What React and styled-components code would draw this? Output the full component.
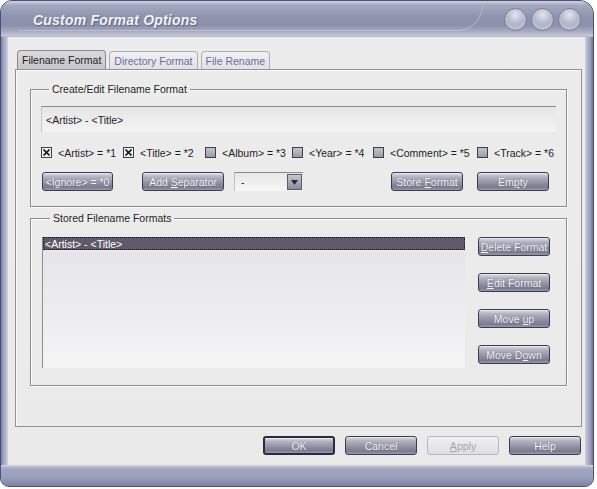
import styled, { createGlobalStyle } from "styled-components";

const GlobalStyle = createGlobalStyle`
  html, body { margin: 0; padding: 0; background: #ffffff; }
  body { font-family: "Liberation Sans", Arial, sans-serif; font-size: 10.5px; color: #1e1e1e; }
  * { box-sizing: border-box; }
`;

const Window = styled.div`
  width: 594px;
  height: 487px;
  border-radius: 12px 14px 9px 9px;
  overflow: hidden;
  display: flex;
  flex-direction: column;
  background: #9a9ebb;
  border: 1px solid #4a4e78;
`;

const TitleBar = styled.div`
  position: relative;
  height: 36px;
  flex: none;
  display: flex;
  align-items: center;
  padding: 0 12px 0 32px;
  background: linear-gradient(#d2d4de 0%, #a4a8bf 12%, #8f94ae 45%, #8c91ab 70%, #a9adc3 88%, #c7c9d6 100%);
  border-bottom: 1px solid #b8bac9;

  &::before {
    content: "";
    position: absolute;
    left: 18px;
    right: 110px;
    top: 4px;
    height: 25px;
    border-radius: 0 0 36px 0;
    border-bottom: 1px solid rgba(220, 222, 234, 0.4);
    border-right: 1px solid rgba(220, 222, 234, 0.4);
    pointer-events: none;
  }
`;

const Title = styled.div`
  flex: 1;
  font-family: "Liberation Sans", Arial, sans-serif;
  font-weight: bold;
  font-style: italic;
  font-size: 14px;
  color: #f2f2f6;
  text-shadow: 1px 1px 1px rgba(60, 64, 96, 0.6);
  letter-spacing: 0.2px;
  margin-top: 3px;
`;

const Caps = styled.div`
  display: flex;
  gap: 4px;
  margin-top: 2px;
`;

const Cap = styled.div`
  width: 23px;
  height: 23px;
  border-radius: 50%;
  border: 1px solid #7a7e9c;
  background: radial-gradient(circle at 50% 28%, #e4e5ee 0%, #bcbfd0 40%, #a0a4bb 75%, #9296b0 100%);
  box-shadow: inset 0 -3px 3px rgba(235, 236, 244, 0.45);
`;

const Middle = styled.div`
  flex: 1;
  display: flex;
  min-height: 0;
`;

const Side = styled.div`
  width: ${(p) => p.$w}px;
  flex: none;
  background: ${(p) =>
    p.$right
      ? "linear-gradient(90deg, #d4d5e2 0, #b4b6cc 2px, #9da0bf 5px, #6f7398 100%)"
      : "linear-gradient(90deg, #6f7398 0, #9da0bf 2px, #b4b6cc 5px, #d4d5e2 100%)"};
`;

const Content = styled.div`
  flex: 1;
  display: flex;
  flex-direction: column;
  padding: 13px 3px 0 7px;
  background: linear-gradient(#ececec, #eaeaea);
`;

const Tabs = styled.div`
  display: flex;
  align-items: flex-end;
  gap: 3px;
  padding-left: 2px;
  height: 19px;
`;

const Tab = styled.div`
  height: ${(p) => (p.$active ? 19 : 18)}px;
  padding: 0 4px;
  display: flex;
  align-items: center;
  border: 1px solid ${(p) => (p.$active ? "#8a8a8e" : "#aeaeb6")};
  border-bottom: none;
  border-radius: 4px 4px 0 0;
  background: ${(p) => (p.$active ? "linear-gradient(#dadadc, #c6c6ca)" : "linear-gradient(#f0f0f2, #e2e2e6)")};
  color: ${(p) => (p.$active ? "#1e1e1e" : "#6b6b9c")};
  white-space: nowrap;
`;

const Panel = styled.div`
  height: 358px;
  border: 1px solid #929292;
  box-shadow: inset 1px 1px 0 #fafafa;
  padding: 13px 14px 0 14px;
  display: flex;
  flex-direction: column;
  gap: 5px;
`;

const Group = styled.fieldset`
  margin: 0;
  padding: ${(p) => p.$pad};
  border: 1px solid #8c8c8c;
  box-shadow: inset 1px 1px 0 #fbfbfb, 1px 1px 0 #fbfbfb;
  min-width: 0;
`;

const Legend = styled.legend`
  margin-left: 8px;
  padding: 0 3px;
  color: #1e1e1e;
`;

const Field = styled.div`
  height: 26px;
  display: flex;
  align-items: center;
  padding-left: 4px;
  border-top: 1px solid #8a8a8a;
  border-left: 1px solid #c6c6c6;
  background: linear-gradient(#e6e6e6, #f3f3f3);
`;

const CheckRow = styled.div`
  display: grid;
  grid-template-columns: 82px 82px 87px 81px 104px auto;
  margin-top: 14px;
  height: 13px;
`;

const CheckItem = styled.label`
  display: flex;
  align-items: center;
  gap: 6px;
  white-space: nowrap;
`;

const Box = styled.span`
  width: 11px;
  height: 11px;
  flex: none;
  border: 1px solid #3e3e48;
  background: ${(p) => (p.$checked ? "#f2f2f2" : "linear-gradient(#c4c4cc, #9c9ca8)")};
  display: flex;
  align-items: center;
  justify-content: center;
`;

const ButtonRow = styled.div`
  display: flex;
  align-items: center;
  margin-top: 13px;
  padding-left: 1px;
  padding-right: 7px;
`;

const Btn = styled.button`
  width: ${(p) => p.$w || 72}px;
  height: 19px;
  margin-left: ${(p) => p.$ml || 0}px;
  padding: 0;
  flex: none;
  font-family: "Liberation Sans", Arial, sans-serif;
  font-size: 10.5px;
  border-radius: 3px;
  border: ${(p) => (p.$default ? "2px solid #2a2a38" : p.disabled ? "1px solid #b6b6be" : "1px solid #3c3c4c")};
  color: ${(p) => (p.disabled ? "#a4a4ac" : "#f6f6fa")};
  background: ${(p) =>
    p.disabled
      ? "linear-gradient(#f0f0f2, #dedee4)"
      : "linear-gradient(#dcdce4 0%, #b0b0be 25%, #86869a 70%, #7c7c90 85%, #9a9aac 100%)"};
  box-shadow: ${(p) => (p.disabled ? "none" : "inset 0 1px 0 rgba(255,255,255,0.45)")};
  text-shadow: ${(p) => (p.disabled ? "none" : "0 0 1px rgba(40,40,60,0.6)")};
  cursor: pointer;
`;

const Combo = styled.div`
  width: 69px;
  height: 19px;
  margin-left: 10px;
  display: flex;
  align-items: center;
  border-top: 1px solid #8a8a8a;
  border-left: 1px solid #c0c0c0;
  background: linear-gradient(#e8e8e8, #f6f6f6);
  padding-left: 6px;
`;

const ComboValue = styled.span`
  flex: 1;
`;

const ComboArrow = styled.span`
  width: 15px;
  height: 16px;
  margin-right: 1px;
  border: 1px solid #5a5a6a;
  background: linear-gradient(#c8c8d2, #8a8a9c);
  display: flex;
  align-items: center;
  justify-content: center;
`;

const Spacer = styled.div`
  flex: 1;
`;

const StoredBody = styled.div`
  display: flex;
  gap: 13px;
`;

const List = styled.div`
  width: 423px;
  height: 131px;
  border-left: 1px solid #8e8e8e;
  background: linear-gradient(#e4e3e7, #f4f4f5);
`;

const ListItem = styled.div`
  height: 13px;
  display: flex;
  align-items: center;
  padding-left: 2px;
  background: ${(p) => (p.$selected ? "#5f5969" : "transparent")};
  outline: ${(p) => (p.$selected ? "1px dotted #101010" : "none")};
  outline-offset: -1px;
  color: ${(p) => (p.$selected ? "#ffffff" : "#1e1e1e")};
`;

const SideButtons = styled.div`
  display: flex;
  flex-direction: column;
  gap: 17px;
`;

const Footer = styled.div`
  display: flex;
  justify-content: flex-end;
  gap: 10px;
  margin-top: 9px;
  padding-right: 1px;
`;

const BottomBar = styled.div`
  height: 21px;
  flex: none;
  border-top: 1px solid #d2d3dd;
  background: linear-gradient(#c2c4d4 0, #a2a5c0 3px, #9a9dba 60%, #7d81a2 100%);
`;

const Check = ({ checked, label }) => (
  <CheckItem>
    <Box $checked={checked}>
      {checked && (
        <svg width="7" height="7" viewBox="0 0 7 7">
          <path d="M0.5 0.5L6.5 6.5M6.5 0.5L0.5 6.5" stroke="#1a1a1a" strokeWidth="1.6" />
        </svg>
      )}
    </Box>
    {label}
  </CheckItem>
);

const checks = [
  { label: "<Artist> = *1", checked: true },
  { label: "<Title> = *2", checked: true },
  { label: "<Album> = *3", checked: false },
  { label: "<Year> = *4", checked: false },
  { label: "<Comment> = *5", checked: false },
  { label: "<Track> = *6", checked: false },
];

export default function App() {
  return (
    <>
      <GlobalStyle />
      <Window>
        <TitleBar>
          <Title>Custom Format Options</Title>
          <Caps>
            <Cap />
            <Cap />
            <Cap />
          </Caps>
        </TitleBar>
        <Middle>
          <Side $w={7} />
          <Content>
            <Tabs>
              <Tab $active>Filename Format</Tab>
              <Tab>Directory Format</Tab>
              <Tab>File Rename</Tab>
            </Tabs>
            <Panel>
              <Group $pad="11px 10px 15px 10px">
                <Legend>Create/Edit Filename Format</Legend>
                <Field>&lt;Artist&gt; - &lt;Title&gt;</Field>
                <CheckRow>
                  {checks.map((c) => (
                    <Check key={c.label} {...c} />
                  ))}
                </CheckRow>
                <ButtonRow>
                  <Btn $w={71}>&lt;Ignore&gt; = *0</Btn>
                  <Btn $w={82} $ml={29}>
                    Add <u>S</u>eparator
                  </Btn>
                  <Combo>
                    <ComboValue>-</ComboValue>
                    <ComboArrow>
                      <svg width="7" height="5" viewBox="0 0 7 5">
                        <path d="M0 0H7L3.5 5Z" fill="#2a2a34" />
                      </svg>
                    </ComboArrow>
                  </Combo>
                  <Spacer />
                  <Btn>
                    Store <u>F</u>ormat
                  </Btn>
                  <Btn $ml={14}>
                    Em<u>p</u>ty
                  </Btn>
                </ButtonRow>
              </Group>
              <Group $pad="13px 10px 17px 11px">
                <Legend>Stored Filename Formats</Legend>
                <StoredBody>
                  <List>
                    <ListItem $selected>&lt;Artist&gt; - &lt;Title&gt;</ListItem>
                  </List>
                  <SideButtons>
                    <Btn>
                      <u>D</u>elete Format
                    </Btn>
                    <Btn>
                      <u>E</u>dit Format
                    </Btn>
                    <Btn>
                      Move <u>u</u>p
                    </Btn>
                    <Btn>
                      Move D<u>o</u>wn
                    </Btn>
                  </SideButtons>
                </StoredBody>
              </Group>
            </Panel>
            <Footer>
              <Btn $default>OK</Btn>
              <Btn>Cancel</Btn>
              <Btn disabled>
                <u>A</u>pply
              </Btn>
              <Btn>Help</Btn>
            </Footer>
          </Content>
          <Side $w={8} $right />
        </Middle>
        <BottomBar />
      </Window>
    </>
  );
}
